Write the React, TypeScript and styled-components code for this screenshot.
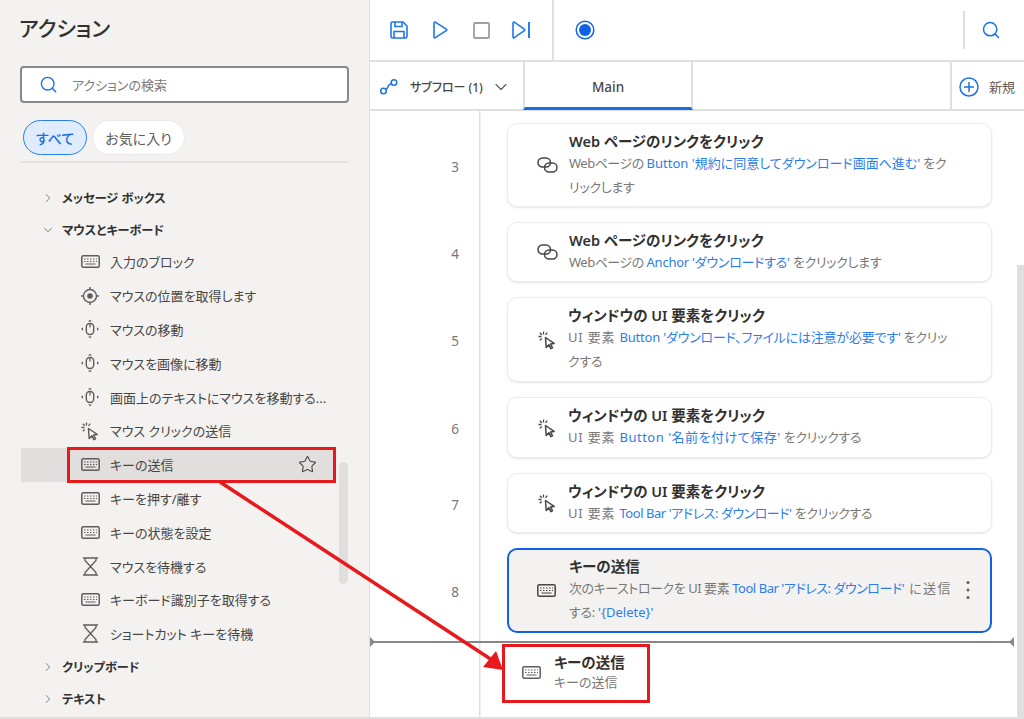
import React from 'react';
import styled, { createGlobalStyle } from 'styled-components';
import { ChevronDown, ChevronRight, Search, Star } from 'lucide-react';

const GlobalStyle = createGlobalStyle`
  html, body {
    margin: 0;
    padding: 0;
    background: #fff;
  }
  body {
    font-family: 'Noto Sans', 'Noto Sans CJK JP', sans-serif;
    font-feature-settings: 'palt';
    color: #323130;
  }
  * {
    box-sizing: border-box;
  }
`;

const Page = styled.div`
  position: relative;
  display: flex;
  width: 1024px;
  height: 719px;
  overflow: hidden;
  border-bottom: 2px solid #e1dfdd;
`;

/* ---------- sidebar ---------- */

const Sidebar = styled.aside`
  position: relative;
  flex: 0 0 370px;
  display: flex;
  flex-direction: column;
  padding: 0 20px;
  background: #f3f2f1;
  border-right: 1px solid #e1dfdd;
`;

const SideTitle = styled.h1`
  margin: 0;
  height: 66px;
  padding-top: 11px;
  margin-left: -1px;
  font-size: 21px;
  line-height: 34px;
  font-weight: 500;
  color: #323130;
`;

const SearchBox = styled.div`
  display: flex;
  align-items: center;
  gap: 14px;
  height: 37px;
  padding-left: 17px;
  background: #fff;
  border: 2px solid #8a8886;
  border-radius: 4px;
  color: #1a73e8;
`;

const SearchHint = styled.span`
  font-size: 13px;
  color: #7b7977;
`;

const Pills = styled.div`
  display: flex;
  gap: 5px;
  height: 60px;
  padding: 17px 0 8px 3px;
  border-bottom: 2px solid #e6e4e2;
`;

const Pill = styled.div<{ $active?: boolean }>`
  display: flex;
  align-items: center;
  justify-content: center;
  height: 35px;
  padding: 0 12px;
  border-radius: 18px;
  font-size: 14px;
  font-weight: ${props => (props.$active ? 500 : 400)};
  color: ${props => (props.$active ? '#1a6fe0' : '#605e5c')};
  background: ${props => (props.$active ? '#deecfd' : '#fff')};
  border: 1px solid ${props => (props.$active ? '#2b7de9' : '#eceae8')};
`;

const Tree = styled.div`
  display: flex;
  flex-direction: column;
  padding-top: 18px;
  margin-left: 1px;
  width: 315px;
`;

const GroupRow = styled.div`
  display: flex;
  align-items: center;
  gap: 7px;
  height: 32px;
  padding: 1px 0 0 20px;
  font-size: 12.2px;
  font-weight: 700;
  color: #323130;
`;

const GroupChevron = styled.span`
  display: flex;
  width: 14px;
  justify-content: center;
  color: #6f6d6b;
`;

const ItemRow = styled.div<{ $selected?: boolean }>`
  position: relative;
  display: flex;
  align-items: center;
  flex: 0 0 33.8px;
  padding: 0 19px 0 58px;
  gap: 9px;
  font-size: 13px;
  color: #484644;
  background: ${props => (props.$selected ? '#e1dfdd' : 'transparent')};

  ${props =>
    props.$selected &&
    `
    &::after {
      content: '';
      position: absolute;
      left: 46px;
      right: 0;
      top: -1px;
      bottom: -1px;
      border: 3px solid #e8191c;
    }
  `}
`;

const ItemIcon = styled.span`
  display: flex;
  flex: 0 0 22px;
  justify-content: center;
  align-items: center;
  color: #605e5c;
`;

const ItemLabel = styled.span`
  flex: 1;
  white-space: nowrap;
`;

const SideThumb = styled.div`
  position: absolute;
  left: 339px;
  top: 462px;
  width: 9px;
  height: 122px;
  border-radius: 5px;
  background: #e1dfdd;
`;

/* ---------- main column ---------- */

const Main = styled.main`
  position: relative;
  flex: 1;
  display: flex;
  flex-direction: column;
  min-width: 0;
`;

const Toolbar = styled.div`
  display: flex;
  align-items: stretch;
  height: 62px;
  border-bottom: 2px solid #e1dfdd;
`;

const RunTools = styled.div`
  display: flex;
  align-items: center;
  gap: 25px;
  width: 184px;
  padding-left: 20px;
  border-right: 2px solid #e1dfdd;
  color: #2176ea;
`;

const NextSlot = styled.span`
  display: flex;
  margin-left: -3px;
`;

const RecordTool = styled.div`
  flex: 1;
  display: flex;
  align-items: center;
  padding-left: 21px;
  color: #0f62e6;
`;

const ToolSearch = styled.div`
  display: flex;
  align-items: center;
  justify-content: center;
  width: 53px;
  height: 38px;
  margin: 11px 8px 0 0;
  border-left: 2px solid #e1dfdd;
  color: #1a73e8;
`;

const TabBar = styled.div`
  display: flex;
  height: 49px;
  border-bottom: 2px solid #e1dfdd;
`;

const SubflowTab = styled.div`
  display: flex;
  align-items: center;
  width: 153px;
  padding: 2px 0 0 9px;
  gap: 11px;
  font-size: 12px;
  font-weight: 500;
  color: #484644;
`;

const SubflowChevron = styled.span`
  display: flex;
  margin-left: -3px;
  color: #605e5c;
`;

const MainTab = styled.div`
  display: flex;
  align-items: center;
  justify-content: center;
  width: 170px;
  padding-top: 4px;
  font-size: 13.5px;
  font-weight: 500;
  color: #484644;
  border-left: 2px solid #e1dfdd;
  border-right: 2px solid #e1dfdd;
  border-bottom: 3px solid #1a6fe0;
  margin-bottom: -1px;
`;

const NewTab = styled.div`
  display: flex;
  align-items: center;
  gap: 10px;
  margin-left: auto;
  width: 74px;
  padding: 2px 0 0 7px;
  border-left: 2px solid #e1dfdd;
  font-size: 13px;
  color: #5f5d5b;
  white-space: nowrap;
  overflow: hidden;
`;

const FlowArea = styled.div`
  flex: 1;
  display: flex;
  flex-direction: column;
  padding-top: 12px;
  background: linear-gradient(#e1dfdd, #e1dfdd) 109px 0 / 1.5px 100% no-repeat;
`;

const StepRow = styled.div`
  display: flex;
  align-items: center;
  margin-bottom: 15px;
`;

const StepNumber = styled.div`
  flex: 0 0 137px;
  padding: 3px 48px 0 0;
  text-align: right;
  font-size: 13.5px;
  color: #7a7876;
`;

const StepCard = styled.div<{ $active?: boolean; $h: number }>`
  position: relative;
  display: flex;
  align-items: center;
  width: 485px;
  padding: ${props => (props.$active ? '6px 0 6px 27px' : '6px 0 6px 29px')};
  height: ${props => props.$h}px;
  background: ${props => (props.$active ? '#f3f2f1' : '#fff')};
  border: ${props => (props.$active ? '2px solid #0f62e6' : '1px solid #eeecea')};
  border-radius: 10px;
  box-shadow: ${props => (props.$active ? 'none' : '0 1px 2px rgba(0, 0, 0, 0.1)')};
`;

const StepIcon = styled.span<{ $active?: boolean }>`
  display: flex;
  justify-content: center;
  flex: 0 0 20px;
  margin-right: ${props => (props.$active ? 13 : 11)}px;
  color: #484644;
`;

const StepBody = styled.div`
  display: flex;
  flex-direction: column;
  white-space: nowrap;
`;

const StepTitle = styled.div`
  font-size: 14.5px;
  line-height: 19px;
  font-weight: 600;
  color: #323130;
`;

const StepText = styled.div`
  font-size: 13px;
  line-height: 24px;
  letter-spacing: -0.3px;
  color: #7a7876;
`;

const Lead = styled.span<{ $ls: number }>`
  letter-spacing: ${props => props.$ls}px;
`;

const Ref = styled.span<{ $ls?: number }>`
  letter-spacing: ${props => props.$ls ?? 0}px;
  color: #2b7de9;
`;

const Kebab = styled.span`
  position: absolute;
  right: 20px;
  top: 30px;
  display: flex;
  color: #605e5c;
`;

const DropLine = styled.div`
  position: relative;
  flex: 0 0 2px;
  width: 644px;
  margin-top: -7px;
  background: #8a8886;

  &::before,
  &::after {
    content: '';
    position: absolute;
    top: -4px;
    border: 5px solid transparent;
  }
  &::before {
    left: 0;
    border-left-color: #8a8886;
  }
  &::after {
    right: 0;
    border-right-color: #8a8886;
  }
`;

const DragGhost = styled.div`
  display: flex;
  align-items: center;
  width: 148px;
  height: 59px;
  margin: 1px 0 0 132px;
  padding: 0 0 3px 17px;
  gap: 13px;
  background: #fff;
  border: 3px solid #e8191c;
  color: #605e5c;
`;

const GhostTitle = styled.div`
  font-size: 14.5px;
  line-height: 20px;
  font-weight: 600;
  color: #323130;
`;

const GhostText = styled.div`
  font-size: 13px;
  line-height: 20px;
  color: #7a7876;
`;

const MainThumb = styled.div`
  position: absolute;
  right: 0;
  top: 265px;
  bottom: 0;
  width: 7px;
  background: #e1dfdd;
`;

const ArrowLayer = styled.svg`
  position: absolute;
  left: 0;
  top: 0;
  pointer-events: none;
`;

/* ---------- icons ---------- */

const KeyboardIcon = () => (
  <svg width="19" height="13" viewBox="0 0 19 13" fill="none">
    <rect x="0.8" y="0.8" width="17.4" height="11.4" rx="1.5" stroke="currentColor" strokeWidth="1.5" />
    <path
      d="M3 4h1.5M6 4h1.5M9 4h1.5M12 4h1.5M15 4h1M3 6.5h1.5M6 6.5h1.5M9 6.5h1.5M12 6.5h1.5M15 6.5h1M4.5 9h10"
      stroke="currentColor"
      strokeWidth="1.2"
    />
  </svg>
);

const TargetIcon = () => (
  <svg width="20" height="20" viewBox="0 0 20 20" fill="none" stroke="currentColor">
    <circle cx="10" cy="10" r="6.500" strokeWidth="1.400" />
    <circle cx="10" cy="10" r="2.800" fill="currentColor" stroke="none" />
    <path d="M10 1v2.500M10 16.500V19M1 10h2.500M16.500 10H19" strokeWidth="1.400" />
  </svg>
);

const MouseMoveIcon = () => (
  <svg width="20" height="20" viewBox="0 0 20 20" fill="none" stroke="currentColor">
    <rect x="6.300" y="4.500" width="7.400" height="11" rx="3.500" strokeWidth="1.400" />
    <path d="M10 4.500v4" strokeWidth="1.200" />
    <path d="M8 2.600L10 .8l2 1.800zM8 17.400L10 19.200l2-1.800zM3 8.200L1 10l2 1.800zM17 8.200L19 10l-2 1.800z" fill="currentColor" stroke="none" />
  </svg>
);

const ClickIcon = () => (
  <svg width="20" height="20" viewBox="0 0 20 20" fill="none" stroke="currentColor">
    <path d="M8.500 7.500l.7 10 2.600-2.800 2 4 1.700-.9-2-3.900 3.700-.5z" strokeWidth="1.500" strokeLinejoin="round" fill="#fff" />
    <path d="M6.500 1.500v3M1.500 6.500h3M2.800 2.800l2 2M10.300 2.600L8.500 4.800M2.800 10.200l2-1.700" strokeWidth="1.300" />
  </svg>
);

const HourglassIcon = () => (
  <svg width="17" height="19" viewBox="0 0 17 19" fill="none" stroke="currentColor" strokeWidth="1.300">
    <path d="M1 1h15M1 18h15M3 1v2.500L8.500 9.500 14 3.500V1M3 18v-2.500L8.500 9.500l5.500 6V18" />
  </svg>
);

const LinkIcon = () => (
  <svg width="21" height="16" viewBox="0 0 21 16" fill="none" stroke="currentColor" strokeWidth="1.500">
    <rect x="1" y="1" width="12.500" height="9" rx="4.500" />
    <rect x="7.500" y="6" width="12.500" height="9" rx="4.500" />
  </svg>
);

const SaveIcon = () => (
  <svg width="18" height="18" viewBox="0 0 18 18" fill="none" stroke="currentColor" strokeWidth="1.600">
    <path d="M2.500 1h10.500L17 5v10.500a1.500 1.500 0 0 1-1.500 1.500h-13A1.500 1.500 0 0 1 1 15.500v-13A1.500 1.500 0 0 1 2.500 1z" />
    <path d="M5 1v4.500h7V1M4 17v-6.500h10V17" />
  </svg>
);

const PlayIcon = () => (
  <svg width="15" height="18" viewBox="0 0 15 18" fill="none" stroke="currentColor" strokeWidth="1.600">
    <path d="M1 2v14c0 .8.700 1.100 1.300.7l11-7c.6-.4.600-1.100 0-1.500l-11-7C1.700.8 1 1.200 1 2z" />
  </svg>
);

const StopIcon = () => (
  <svg width="17" height="17" viewBox="0 0 17 17" fill="none" stroke="#a19f9d" strokeWidth="1.800">
    <rect x="1" y="1" width="15" height="15" rx="1" />
  </svg>
);

const NextIcon = () => (
  <svg width="18" height="18" viewBox="0 0 18 18" fill="none" stroke="currentColor" strokeWidth="1.600">
    <path d="M1 2v14c0 .8.700 1.100 1.300.7l10-7c.6-.4.600-1.100 0-1.500l-10-7C1.700.8 1 1.200 1 2z" />
    <path d="M17 1v16" strokeWidth="1.900" />
  </svg>
);

const RecordIcon = () => (
  <svg width="20" height="20" viewBox="0 0 20 20" fill="none">
    <circle cx="10" cy="10" r="8.800" stroke="currentColor" strokeWidth="1.500" />
    <circle cx="10" cy="10" r="6" fill="currentColor" />
  </svg>
);

const SubflowIcon = () => (
  <svg width="20" height="20" viewBox="0 0 20 20" fill="none" stroke="#1a73e8" strokeWidth="1.500">
    <circle cx="4.500" cy="14" r="2.800" />
    <circle cx="15" cy="5.500" r="2.800" />
    <path d="M7 12.500c2-1 1.500-3 3-4.500 1-1 1.500-1 2.500-1.500" />
  </svg>
);

const PlusCircleIcon = () => (
  <svg width="20" height="20" viewBox="0 0 20 20" fill="none" stroke="#1a73e8" strokeWidth="1.500">
    <circle cx="10" cy="10" r="9" />
    <path d="M10 5v10M5 10h10" />
  </svg>
);

const KebabIcon = () => (
  <svg width="4" height="20" viewBox="0 0 4 20" fill="currentColor">
    <circle cx="2" cy="2.500" r="1.500" />
    <circle cx="2" cy="10" r="1.500" />
    <circle cx="2" cy="17.500" r="1.500" />
  </svg>
);

/* ---------- data ---------- */

const actionItems = [
  { label: '入力のブロック', icon: <KeyboardIcon /> },
  { label: 'マウスの位置を取得します', icon: <TargetIcon /> },
  { label: 'マウスの移動', icon: <MouseMoveIcon /> },
  { label: 'マウスを画像に移動', icon: <MouseMoveIcon /> },
  { label: '画面上のテキストにマウスを移動する...', icon: <MouseMoveIcon /> },
  { label: 'マウス クリックの送信', icon: <ClickIcon /> },
  { label: 'キーの送信', icon: <KeyboardIcon />, selected: true },
  { label: 'キーを押す/離す', icon: <KeyboardIcon /> },
  { label: 'キーの状態を設定', icon: <KeyboardIcon /> },
  { label: 'マウスを待機する', icon: <HourglassIcon /> },
  { label: 'キーボード識別子を取得する', icon: <KeyboardIcon /> },
  { label: 'ショートカット キーを待機', icon: <HourglassIcon /> },
];

const steps = [
  {
    no: 3,
    h: 84,
    title: 'Web ページのリンクをクリック',
    icon: <LinkIcon />,
    text: (
      <>
        <Lead $ls={-0.5}>Webページの </Lead>
        <Ref>Button '規約に同意してダウンロード画面へ進む'</Ref> をク
        <br />
        リックします
      </>
    ),
  },
  {
    no: 4,
    h: 60,
    title: 'Web ページのリンクをクリック',
    icon: <LinkIcon />,
    text: (
      <>
        <Lead $ls={-0.5}>Webページの </Lead>
        <Ref $ls={-0.25}>Anchor 'ダウンロードする'</Ref> をクリックします
      </>
    ),
  },
  {
    no: 5,
    h: 85,
    title: 'ウィンドウの UI 要素をクリック',
    icon: <ClickIcon />,
    text: (
      <>
        <Lead $ls={0.8}>UI 要素 </Lead>
        <Ref $ls={-0.2}>Button 'ダウンロード、ファイルには注意が必要です'</Ref> をクリッ
        <br />
        クする
      </>
    ),
  },
  {
    no: 6,
    h: 61,
    title: 'ウィンドウの UI 要素をクリック',
    icon: <ClickIcon />,
    text: (
      <>
        <Lead $ls={0.8}>UI 要素 </Lead>
        <Ref $ls={0.5}>Button '名前を付けて保存'</Ref> をクリックする
      </>
    ),
  },
  {
    no: 7,
    h: 60,
    title: 'ウィンドウの UI 要素をクリック',
    icon: <ClickIcon />,
    text: (
      <>
        <Lead $ls={0.8}>UI 要素 </Lead>
        <Ref $ls={-0.45}>Tool Bar 'アドレス: ダウンロード'</Ref> をクリックする
      </>
    ),
  },
  {
    no: 8,
    h: 85,
    active: true,
    title: 'キーの送信',
    icon: <KeyboardIcon />,
    text: (
      <>
        <Lead $ls={-0.45}>次のキーストロークを UI 要素 </Lead>
        <Ref $ls={-0.45}>Tool Bar 'アドレス: ダウンロード'</Ref>
        <Lead $ls={1.5}> に送信</Lead>
        <br />
        する: <Ref>'{'{Delete}'}'</Ref>
      </>
    ),
  },
];

export default function App() {
  return (
    <>
      <GlobalStyle />
      <Page>
        <Sidebar>
          <SideTitle>アクション</SideTitle>
          <SearchBox>
            <Search size={19} strokeWidth={1.8} />
            <SearchHint>アクションの検索</SearchHint>
          </SearchBox>
          <Pills>
            <Pill $active>すべて</Pill>
            <Pill>お気に入り</Pill>
          </Pills>
          <Tree>
            <GroupRow>
              <GroupChevron>
                <ChevronRight size={14} strokeWidth={1.5} />
              </GroupChevron>
              メッセージ ボックス
            </GroupRow>
            <GroupRow>
              <GroupChevron>
                <ChevronDown size={14} strokeWidth={1.5} />
              </GroupChevron>
              マウスとキーボード
            </GroupRow>
            {actionItems.map(item => (
              <ItemRow key={item.label} $selected={item.selected}>
                <ItemIcon>{item.icon}</ItemIcon>
                <ItemLabel>{item.label}</ItemLabel>
                {item.selected && <Star size={19} strokeWidth={1.4} />}
              </ItemRow>
            ))}
            <GroupRow>
              <GroupChevron>
                <ChevronRight size={14} strokeWidth={1.5} />
              </GroupChevron>
              クリップボード
            </GroupRow>
            <GroupRow>
              <GroupChevron>
                <ChevronRight size={14} strokeWidth={1.5} />
              </GroupChevron>
              テキスト
            </GroupRow>
          </Tree>
          <SideThumb />
        </Sidebar>

        <Main>
          <Toolbar>
            <RunTools>
              <SaveIcon />
              <PlayIcon />
              <StopIcon />
              <NextSlot>
                <NextIcon />
              </NextSlot>
            </RunTools>
            <RecordTool>
              <RecordIcon />
            </RecordTool>
            <ToolSearch>
              <Search size={20} strokeWidth={1.8} />
            </ToolSearch>
          </Toolbar>
          <TabBar>
            <SubflowTab>
              <SubflowIcon />
              サブフロー (1)
              <SubflowChevron>
                <ChevronDown size={20} strokeWidth={1.4} />
              </SubflowChevron>
            </SubflowTab>
            <MainTab>Main</MainTab>
            <NewTab>
              <PlusCircleIcon />
              新規
            </NewTab>
          </TabBar>
          <FlowArea>
            {steps.map(step => (
              <StepRow key={step.no}>
                <StepNumber>{step.no}</StepNumber>
                <StepCard $active={step.active} $h={step.h}>
                  <StepIcon $active={step.active}>{step.icon}</StepIcon>
                  <StepBody>
                    <StepTitle>{step.title}</StepTitle>
                    <StepText>{step.text}</StepText>
                  </StepBody>
                  {step.active && (
                    <Kebab>
                      <KebabIcon />
                    </Kebab>
                  )}
                </StepCard>
              </StepRow>
            ))}
            <DropLine />
            <DragGhost>
              <KeyboardIcon />
              <div>
                <GhostTitle>キーの送信</GhostTitle>
                <GhostText>キーの送信</GhostText>
              </div>
            </DragGhost>
          </FlowArea>
          <MainThumb />
        </Main>

        <ArrowLayer width="1024" height="719" viewBox="0 0 1024 719">
          <path d="M220 482L492 660" stroke="#e8191c" strokeWidth="3.500" fill="none" />
          <polygon points="503,670 483,667 496,651" fill="#e8191c" />
        </ArrowLayer>
      </Page>
    </>
  );
}
